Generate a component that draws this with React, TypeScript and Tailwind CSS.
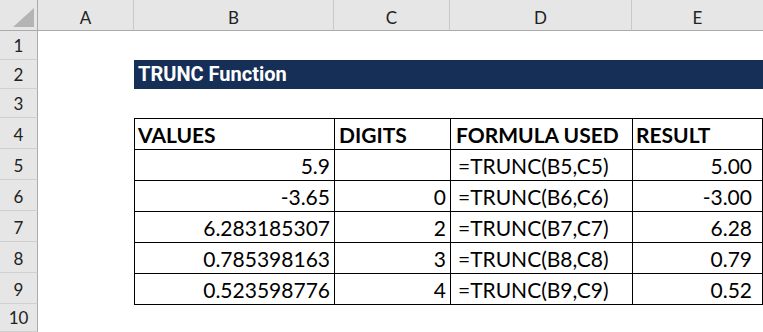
import React from "react";

const rowHeights = [29, 29, 29, 31, 31, 31, 31, 31, 31, 28];

const data = [
  { b: "5.9", c: "", d: "=TRUNC(B5,C5)", e: "5.00" },
  { b: "-3.65", c: "0", d: "=TRUNC(B6,C6)", e: "-3.00" },
  { b: "6.283185307", c: "2", d: "=TRUNC(B7,C7)", e: "6.28" },
  { b: "0.785398163", c: "3", d: "=TRUNC(B8,C8)", e: "0.79" },
  { b: "0.523598776", c: "4", d: "=TRUNC(B9,C9)", e: "0.52" },
];

const font = { fontFamily: "Lato, 'Open Sans', sans-serif" };

function ColHead({ label, w, last }: { label: string; w: string; last?: boolean }) {
  return (
    <div
      className={`${w} h-full flex items-end justify-center pb-[4px] bg-[#e6e6e6] border-b border-[#ababab] ${
        last ? "" : "border-r border-r-[#c9c9c9]"
      } text-[17px] leading-none text-[#222]`}
    >
      {label}
    </div>
  );
}

export default function App() {
  return (
    <div className="w-[763px] h-[332px] overflow-hidden bg-white flex flex-col" style={font}>
      {/* column header */}
      <div className="flex h-[31px] shrink-0">
        <div className="w-[38px] h-full bg-[#e6e6e6] border-b border-r border-[#ababab] relative">
          <svg className="absolute left-[13px] top-[8px]" width="22" height="20" viewBox="0 0 22 20">
            <polygon points="21,0 21,19 0,19" fill="#b4b4b4" />
          </svg>
        </div>
        <ColHead label="A" w="w-[96px]" />
        <ColHead label="B" w="w-[200px]" />
        <ColHead label="C" w="w-[116px]" />
        <ColHead label="D" w="w-[182px]" />
        <ColHead label="E" w="w-[131px]" last />
      </div>
      <div className="flex flex-1">
        {/* row headers */}
        <div className="w-[38px] flex flex-col shrink-0">
          {rowHeights.map((h, i) => (
            <div
              key={i}
              style={{ height: h }}
              className="bg-[#e6e6e6] border-r border-[#ababab] border-b border-b-[#cfcfcf] flex items-end justify-center pb-[5px] text-[17px] leading-none text-[#222]"
            >
              {i + 1}
            </div>
          ))}
        </div>
        {/* sheet body */}
        <div className="flex-1 flex flex-col">
          <div className="h-[29px]" />
          <div className="h-[29px] flex">
            <div className="w-[96px]" />
            <div
              className="flex-1 bg-[#152f56] text-white font-bold text-[20px] leading-none flex items-end pl-[4px] pb-[5px]"
              style={{ fontFamily: "Roboto, 'Liberation Sans', sans-serif" }}
            >
              TRUNC Function
            </div>
          </div>
          <div className="h-[29px]" />
          <div className="flex">
            <div className="w-[96px] shrink-0" />
            <div className="flex-1 flex flex-col border-l border-t border-black text-[21px] leading-none text-black">
              <div className="h-[31px] flex font-bold border-b border-black">
                <div className="w-[200px] border-r border-black flex items-end pl-[3px] pb-[4px]">VALUES</div>
                <div className="w-[116px] border-r border-black flex items-end pl-[4px] pb-[4px]">DIGITS</div>
                <div className="w-[182px] border-r border-black flex items-end pl-[5px] pb-[4px]">FORMULA USED</div>
                <div className="flex-1 border-r border-black flex items-end pl-[3px] pb-[4px]">RESULT</div>
              </div>
              {data.map((r, i) => (
                <div key={i} className="h-[31px] flex border-b border-black">
                  <div className="w-[200px] border-r border-black flex items-end justify-end pr-[4px] pb-[4px]">{r.b}</div>
                  <div className="w-[116px] border-r border-black flex items-end justify-end pr-[4px] pb-[4px]">{r.c}</div>
                  <div className="w-[182px] border-r border-black flex items-end pl-[7px] pb-[4px]">{r.d}</div>
                  <div className="flex-1 border-r border-black flex items-end justify-end pr-[10px] pb-[4px]">{r.e}</div>
                </div>
              ))}
            </div>
          </div>
        </div>
      </div>
    </div>
  );
}
